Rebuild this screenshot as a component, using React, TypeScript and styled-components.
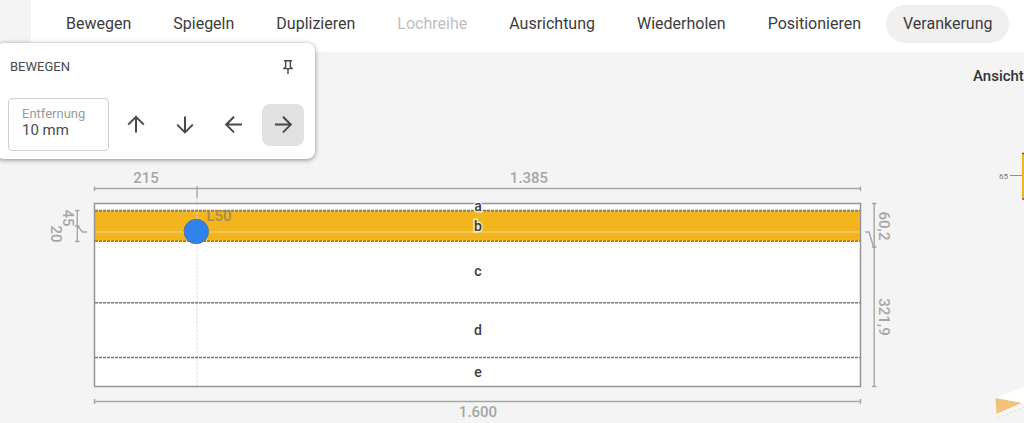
import React, { useState } from "react";
import styled, { createGlobalStyle } from "styled-components";

const GlobalStyle = createGlobalStyle`
  *, *::before, *::after { box-sizing: border-box; }
  body {
    margin: 0;
    background: #f4f4f4;
    color: #4a4a4a;
    font-family: Roboto, "Liberation Sans", sans-serif;
    overflow: hidden;
  }
  button, input { font: inherit; color: inherit; }
`;

const Page = styled.div`
  position: relative;
  display: flex;
  flex-direction: column;
  min-height: 100vh;
`;

const Toolbar = styled.nav`
  display: flex;
  align-items: center;
  gap: 8px;
  margin-left: 31px;
  padding: 5px 12px 9px 18px;
  background: #fff;
`;

const ToolButton = styled.button<{ $active?: boolean }>`
  flex: none;
  height: 38px;
  padding: 0 17px;
  border: 0;
  border-radius: 19px;
  background: ${(p) => (p.$active ? "#f0f0f0" : "transparent")};
  color: #3c3c3c;
  font-size: 16px;
  font-weight: 400;
  line-height: 20px;
  cursor: pointer;
  &:disabled { color: #bebebe; cursor: default; }
`;

const Panel = styled.section`
  position: absolute;
  top: 43px;
  left: -4px;
  width: 319px;
  padding: 12px 11px 8px 12px;
  border-radius: 8px;
  background: #fff;
  box-shadow: 0 1px 5px rgba(0, 0, 0, 0.45);
`;

const PanelHeader = styled.header`
  display: flex;
  align-items: center;
  justify-content: space-between;
  height: 24px;
  padding: 0 8px 0 2px;
`;

const PanelTitle = styled.h2`
  margin: 0;
  font-size: 13px;
  font-weight: 400;
  line-height: 16px;
`;

const PinButton = styled.button`
  display: grid;
  place-items: center;
  width: 16px;
  height: 20px;
  padding: 0;
  border: 0;
  background: none;
`;

const PanelBody = styled.div`
  display: flex;
  align-items: center;
  justify-content: space-between;
  margin-top: 19px;
`;

const Field = styled.label`
  display: flex;
  flex-direction: column;
  width: 101px;
  height: 53px;
  padding: 7px 13px;
  border: 1px solid #cfcfcf;
  border-radius: 4px;
`;

const FieldLabel = styled.span`
  color: #9a9a9a;
  font-size: 13px;
  line-height: 16px;
`;

const FieldInput = styled.input`
  width: 100%;
  height: 16px;
  padding: 0;
  border: 0;
  outline: 0;
  background: none;
  font-size: 15px;
  line-height: 16px;
`;

const Arrows = styled.div`
  display: flex;
  gap: 7px;
`;

const ArrowButton = styled.button<{ $active?: boolean }>`
  display: grid;
  place-items: center;
  width: 42px;
  height: 42px;
  padding: 0;
  border: 0;
  border-radius: 8px;
  background: ${(p) => (p.$active ? "#e1e1e1" : "transparent")};
`;

const Workspace = styled.main`
  flex: 1;
  display: grid;
  grid-template-columns: minmax(0, 1fr) 51px;
`;

const Plan = styled.section`
  padding: 108px 69px 0 40px;
`;

const Drawing = styled.svg`
  display: block;
  width: 100%;
  height: auto;
`;

const Side = styled.aside`
  overflow: hidden;
  padding-top: 14px;
`;

const SideTitle = styled.h2`
  margin: 0;
  color: #333;
  font-size: 15px;
  font-weight: 500;
  line-height: 20px;
  white-space: nowrap;
`;

const SideDrawing = styled.svg`
  display: block;
  margin-top: 64px;
`;

const Dimension = styled.text`
  fill: #a6a6a6;
  font-size: 15px;
  font-weight: 500;
  text-anchor: middle;
`;

const HoleLabel = styled(Dimension)`
  fill: #a68c4c;
`;

const Zone = styled.text`
  fill: #3c3c3c;
  stroke: rgba(255, 255, 255, 0.7);
  stroke-width: 3px;
  paint-order: stroke;
  font-size: 14px;
  font-weight: 500;
  text-anchor: middle;
`;

const tools = [
  { label: "Bewegen" },
  { label: "Spiegeln" },
  { label: "Duplizieren" },
  { label: "Lochreihe", disabled: true },
  { label: "Ausrichtung" },
  { label: "Wiederholen" },
  { label: "Positionieren" },
  { label: "Verankerung", active: true },
];

const directions = [
  { label: "Nach oben", turn: -90 },
  { label: "Nach unten", turn: 90 },
  { label: "Nach links", turn: 180 },
  { label: "Nach rechts", turn: 0, active: true },
];

const zones = [
  { name: "a", y: 211 },
  { name: "b", y: 231 },
  { name: "c", y: 276 },
  { name: "d", y: 335 },
  { name: "e", y: 377 },
];

function Arrow({ turn }: { turn: number }) {
  return (
    <svg width="24" height="24" viewBox="0 0 24 24" aria-hidden="true">
      <path
        d="M4 11.6H19.5M12 3.8L19.8 11.6L12 19.4"
        transform={`rotate(${turn} 12 11.6)`}
        fill="none"
        stroke="#484848"
        strokeWidth="2"
      />
    </svg>
  );
}

function Pin() {
  return (
    <svg width="10" height="16" viewBox="0 0 10 16" aria-hidden="true">
      <path
        d="M1 1.7H9M2.7 1.7V8.2M7.3 1.7V8.2M2.7 7.8L.9 9.6H9.1L7.3 7.8M5 9.6V15"
        fill="none"
        stroke="#484848"
        strokeWidth="1.4"
      />
    </svg>
  );
}

function BoardPlan() {
  return (
    <Drawing viewBox="40 160 864 263" role="img" aria-label="Bauteil">
      <rect x="94.5" y="203.5" width="766" height="183" fill="#fff" />
      <rect x="94.5" y="210.5" width="766" height="30.5" fill="#f2b51d" />
      <path d="M94.5 232H860" stroke="#eccf8e" strokeWidth="1.6" strokeDasharray="3 1" />
      <path d="M197 199V386" stroke="#dedede" strokeDasharray="3 1.2" />
      <g stroke="#777" strokeWidth="1.6" strokeDasharray="3 1">
        <path d="M95 210.6H860" />
        <path d="M95 241.2H860" />
        <path d="M95 302.8H860" />
        <path d="M95 357.5H860" />
      </g>
      <rect x="94.5" y="203.5" width="766" height="183" fill="none" stroke="#959595" strokeWidth="1.5" />

      <g fill="none" stroke="#a6a6a6" strokeWidth="1.4">
        <path d="M94.5 188.5H860.5M94.5 186.5V191M860.5 186.5V191M197 186V198" />
        <path d="M94.5 401.5H860.5M94.5 399V404M860.5 399V404" />
        <path d="M874.2 203.5V386.5M872 203.5H876.5M872 386.5H876.5M872 247H876.5" />
        <path d="M865 232H869L873.6 247" />
        <path d="M77.3 210.5V241.5M75 210.5H79.5M75 241.5H79.5M75 226H79.5" />
        <path d="M77.5 226L82.5 232H87" />
      </g>

      <circle cx="196.3" cy="231.5" r="12.2" fill="#3083ea" stroke="#5a7396" />
      <HoleLabel x="219" y="221">L50</HoleLabel>

      <Dimension x="146" y="183">215</Dimension>
      <Dimension x="529" y="183">1.385</Dimension>
      <Dimension x="478" y="417">1.600</Dimension>
      <Dimension transform="translate(63 218) rotate(90)">45</Dimension>
      <Dimension transform="translate(51 234) rotate(90)">20</Dimension>
      <Dimension transform="translate(879 226) rotate(90)">60,2</Dimension>
      <Dimension transform="translate(879 317) rotate(90)">321,9</Dimension>

      {zones.map((zone) => (
        <Zone key={zone.name} x="478" y={zone.y}>{zone.name}</Zone>
      ))}
    </Drawing>
  );
}

function SideViews() {
  return (
    <SideDrawing width="100" height="273" viewBox="0 0 100 273" role="img" aria-label="Seitenansicht">
      <text x="26" y="29" fontSize="8" fill="#777">65</text>
      <path d="M37 25.5H49" stroke="#8f8f8f" />
      <rect x="49" y="3" width="50" height="46" fill="#f2b51d" />
      <path d="M49 3.5H99M49 49H99" stroke="#5d5d5d" strokeWidth="1.4" strokeDasharray="3 1" />
      <path d="M22.5 248L54 236V260Z" fill="#fff" />
      <path d="M22.5 248L49 253L23.5 264Z" fill="#f1c27a" />
      <path d="M23.5 264L49 253L54 251V256L24 268Z" fill="#f7f7f7" />
      <path d="M24 268L54 256" stroke="#d6d6d6" strokeWidth=".7" strokeDasharray="3 1.5" />
    </SideDrawing>
  );
}

export default function App() {
  const [distance, setDistance] = useState("10 mm");
  return (
    <>
      <GlobalStyle />
      <Page>
        <Toolbar aria-label="Werkzeuge">
          {tools.map((tool) => (
            <ToolButton key={tool.label} type="button" disabled={tool.disabled} $active={tool.active}>
              {tool.label}
            </ToolButton>
          ))}
        </Toolbar>
        <Workspace>
          <Plan>
            <BoardPlan />
          </Plan>
          <Side>
            <SideTitle>Ansicht</SideTitle>
            <SideViews />
          </Side>
        </Workspace>
        <Panel>
          <PanelHeader>
            <PanelTitle>BEWEGEN</PanelTitle>
            <PinButton type="button" aria-label="Anheften"><Pin /></PinButton>
          </PanelHeader>
          <PanelBody>
            <Field>
              <FieldLabel>Entfernung</FieldLabel>
              <FieldInput type="text" value={distance} onChange={(e) => setDistance(e.target.value)} />
            </Field>
            <Arrows>
              {directions.map((d) => (
                <ArrowButton key={d.label} type="button" aria-label={d.label} $active={d.active}>
                  <Arrow turn={d.turn} />
                </ArrowButton>
              ))}
            </Arrows>
          </PanelBody>
        </Panel>
      </Page>
    </>
  );
}
